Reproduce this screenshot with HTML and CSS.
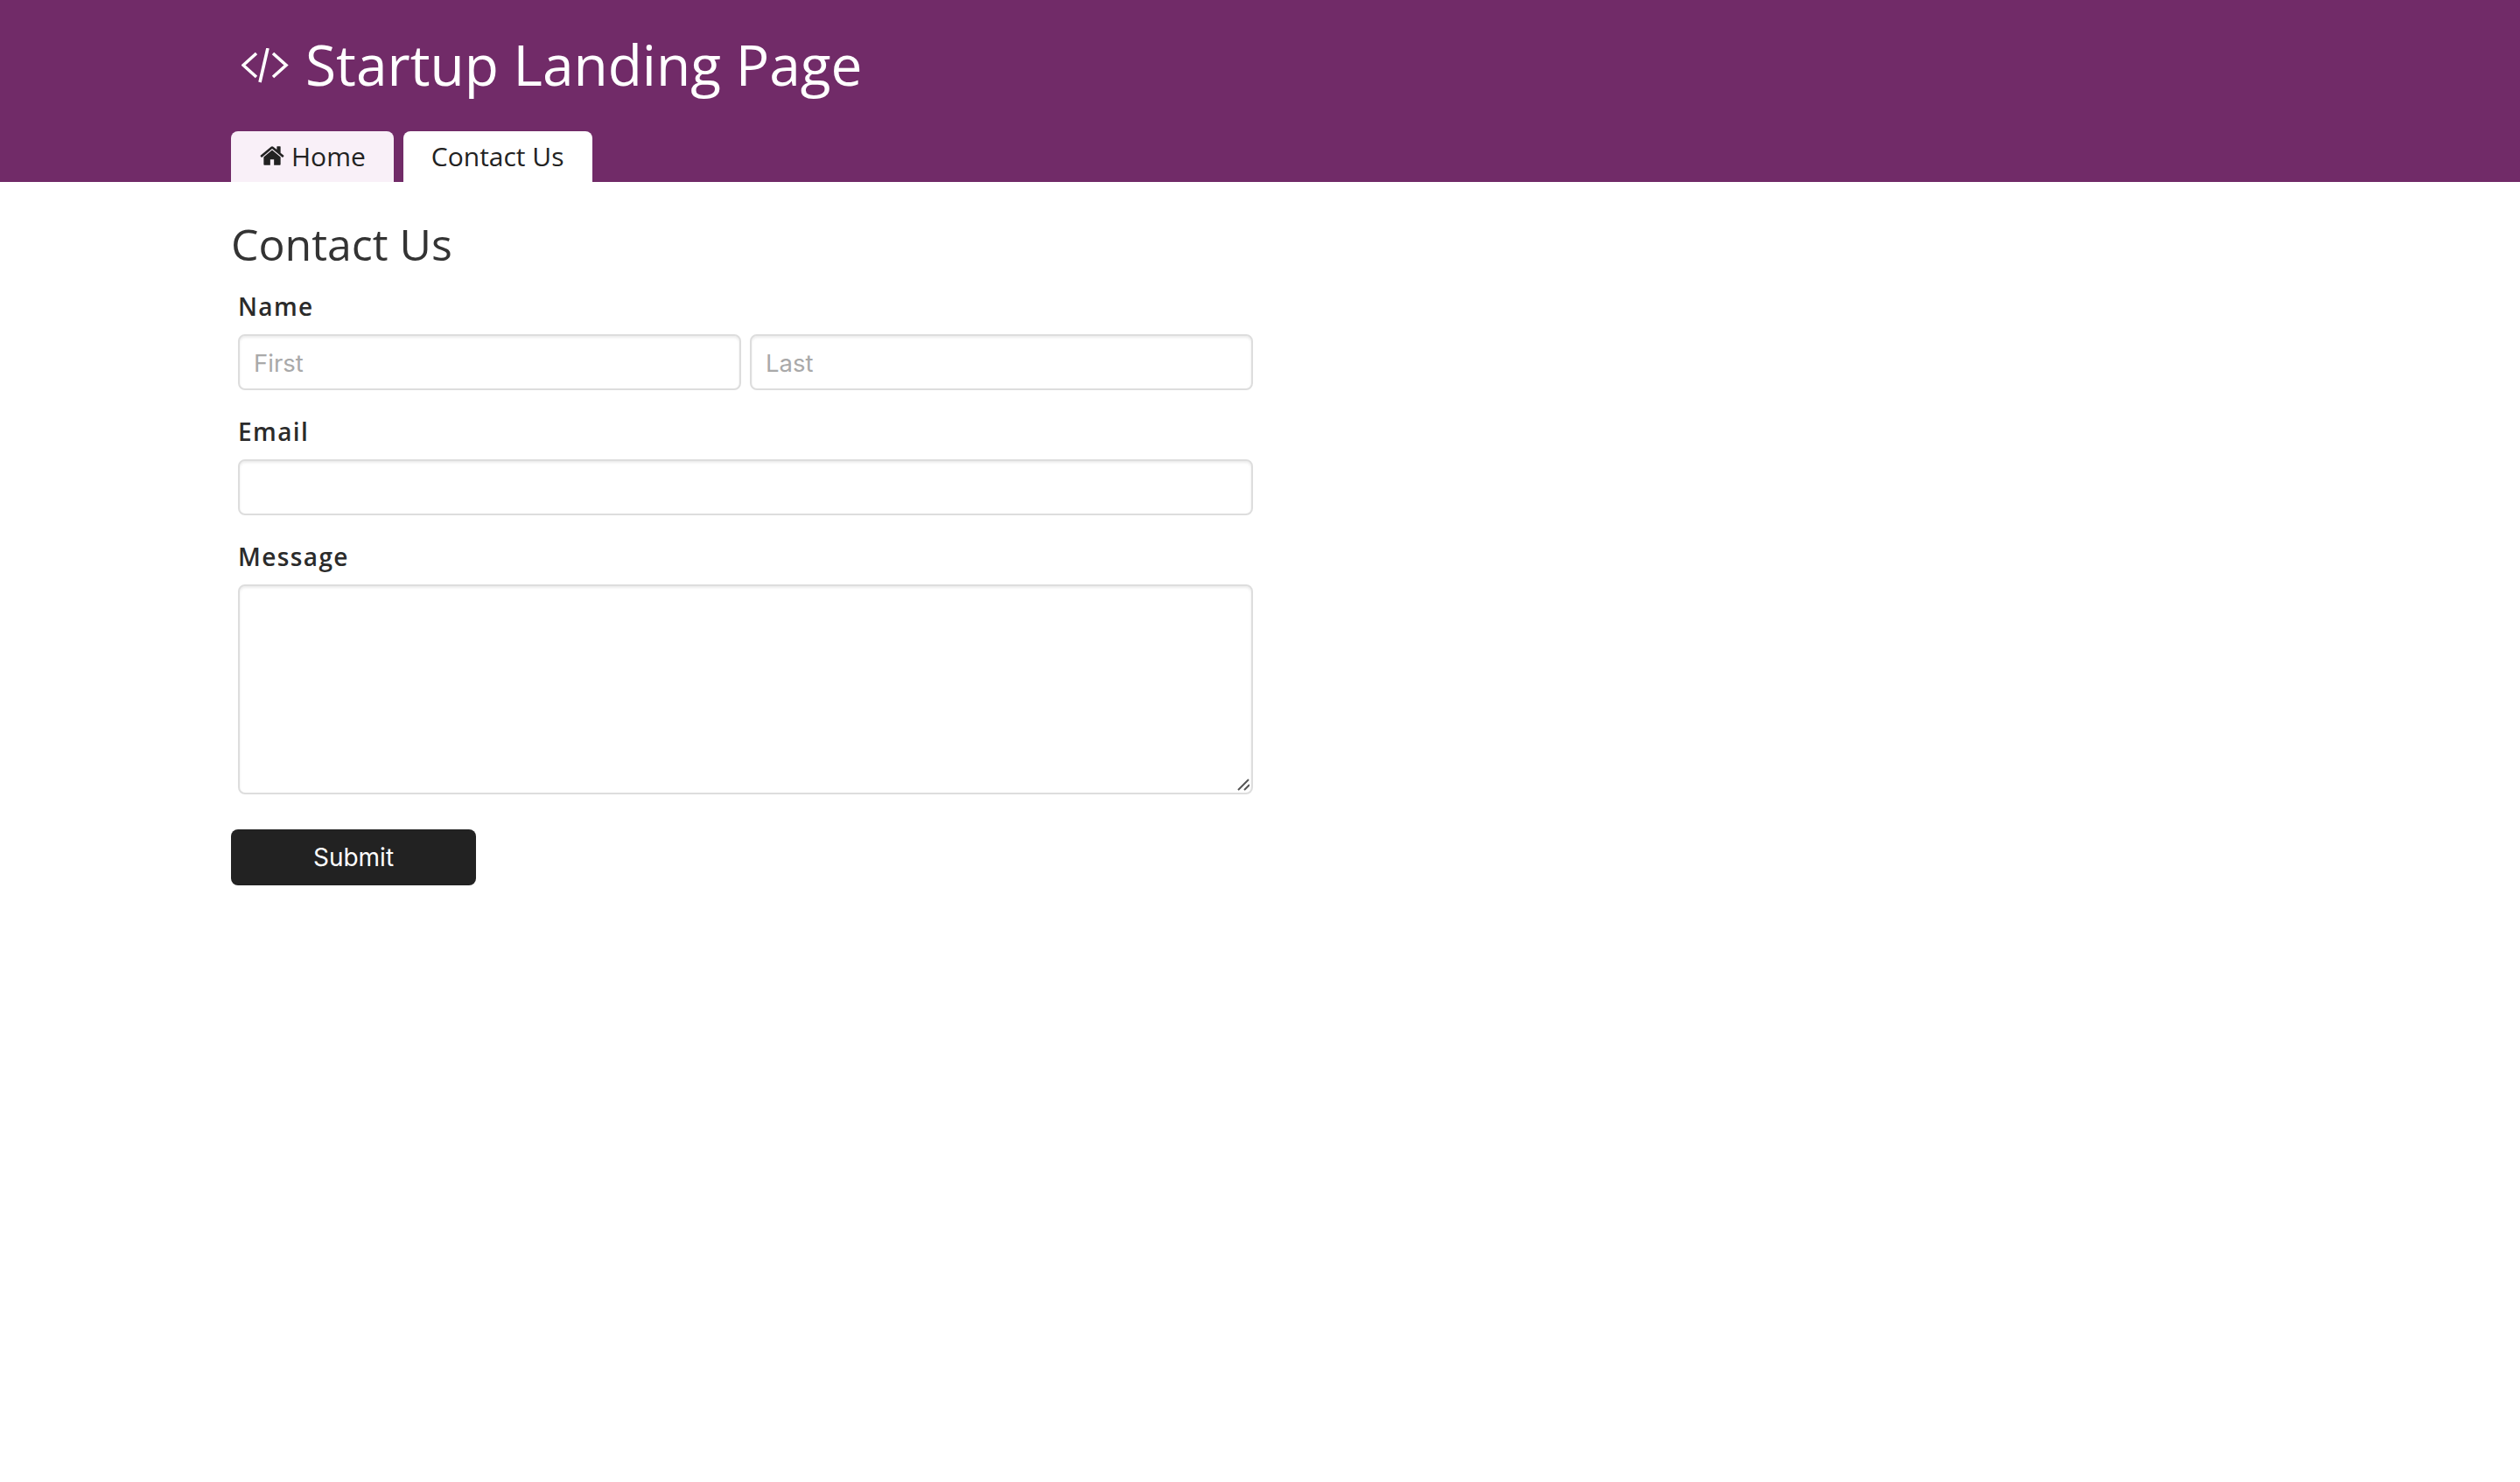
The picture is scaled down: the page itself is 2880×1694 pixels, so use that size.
FILE: index.html
```html
<!DOCTYPE html>
<html lang="en">
<head>
<meta charset="utf-8">
<title>Startup Landing Page</title>
<link rel="stylesheet" href="styles.css">
</head>
<body>
<header class="site-header">
  <h1 class="brand">
    <svg class="brand-icon" viewBox="0 0 54 40" fill="none" stroke="currentColor" stroke-width="3.6" aria-hidden="true">
      <path d="M17 6 2 19.500 17 33M30 0 21 39M36 6 51 19.500 36 33"/>
    </svg>
    <span>Startup Landing Page</span>
  </h1>
  <nav class="tabs">
    <a class="tab tab-home" href="#">
      <svg class="home-icon" viewBox="0 0 1792 1792" fill="currentColor" aria-hidden="true"><path d="M1472 992v480q0 26-19 45t-45 19h-384v-384h-256v384h-384q-26 0-45-19t-19-45v-480q0-1 .5-3t.5-3l575-474 575 474q1 2 1 6zm223-69l-62 74q-8 9-21 11h-3q-13 0-21-7l-692-577-692 577q-12 8-24 7-13-2-21-11l-62-74q-8-10-7-23.500t11-21.500l719-599q32-26 76-26t76 26l244 204v-195q0-14 9-23t23-9h192q14 0 23 9t9 23v408l219 182q10 8 11 21.500t-7 23.500z"/></svg>
      Home
    </a>
    <a class="tab tab-active" href="#">Contact Us</a>
  </nav>
</header>
<main class="content">
  <h2 class="page-title">Contact Us</h2>
  <form class="contact-form">
    <div class="field">
      <label class="field-label">Name</label>
      <div class="name-row">
        <input class="control" type="text" placeholder="First">
        <input class="control" type="text" placeholder="Last">
      </div>
    </div>
    <div class="field">
      <label class="field-label">Email</label>
      <input class="control" type="email">
    </div>
    <div class="field">
      <label class="field-label">Message</label>
      <div class="area-wrap">
        <textarea class="control control-area"></textarea>
        <svg class="grip" viewBox="0 0 14 14" fill="none" stroke="#555" stroke-width="2" aria-hidden="true"><path d="M1 13 13 1M8 13 14 7"/></svg>
      </div>
    </div>
  </form>
  <button class="submit" type="button">Submit</button>
</main>
</body>
</html>
```

FILE: styles.css
```css
* { box-sizing: border-box; }
html, body { margin: 0; padding: 0; background: #fff; }
body { font-family: "Open Sans", sans-serif; color: #222; min-height: 1694px; }

.site-header {
  background: #712b68;
  height: 208px;
  padding: 0 264px;
  display: flex;
  flex-direction: column;
  justify-content: flex-end;
}
.brand {
  margin: 0 0 31px;
  display: flex;
  align-items: center;
  gap: 19px;
  padding-left: 12px;
  height: 90px;
  color: #fff;
  font-weight: 400;
  font-size: 64px;
  line-height: 90px;
}
.brand-icon { width: 54px; height: 40px; flex: none; margin-top: 2px; }
.tabs { display: flex; gap: 11px; height: 58px; }
.tab {
  display: flex;
  align-items: center;
  gap: 7px;
  padding: 0 32px 2px;
  border-radius: 8px 8px 0 0;
  color: #222;
  text-decoration: none;
  font-size: 30px;
}
.tab-home { background: #f9f0f8; }
.tab-active { background: #fff; }
.home-icon { width: 30px; height: 30px; flex: none; }

.content { padding: 0 0 0 264px; width: 1440px; }
.page-title {
  margin: 0;
  padding-top: 36px;
  font-size: 50px;
  line-height: 70px;
  font-weight: 400;
  color: #333;
}
.contact-form { padding: 0 8px; display: flex; flex-direction: column; gap: 28px; margin-top: 17px; }
.field { display: flex; flex-direction: column; }
.field-label {
  font-size: 28px;
  line-height: 38px;
  font-weight: 600;
  letter-spacing: 1.400px;
  color: #2b2b2b;
  margin-bottom: 13px;
}
.name-row { display: flex; gap: 10px; }
.name-row .control { flex: 1 1 0; min-width: 0; }
.control {
  display: block;
  width: 100%;
  height: 64px;
  padding: 2px 16px 0;
  border: 2px solid #ddd;
  border-radius: 8px;
  background: #fff;
  font-family: Inter, sans-serif;
  font-size: 27.500px;
  color: #222;
  box-shadow: inset 0 2px 3px rgba(0, 0, 0, 0.08);
  outline: none;
}
.control::placeholder { color: #a9a9a9; opacity: 1; }
.area-wrap { position: relative; }
.control-area { height: 240px; resize: none; }
.grip { position: absolute; right: 4px; bottom: 4px; width: 14px; height: 14px; pointer-events: none; }
.submit {
  display: block;
  margin-top: 40px;
  width: 280px;
  height: 64px;
  border: 0;
  border-radius: 8px;
  background: #222;
  color: #fff;
  font-family: Inter, sans-serif;
  font-size: 28px;
}
```
